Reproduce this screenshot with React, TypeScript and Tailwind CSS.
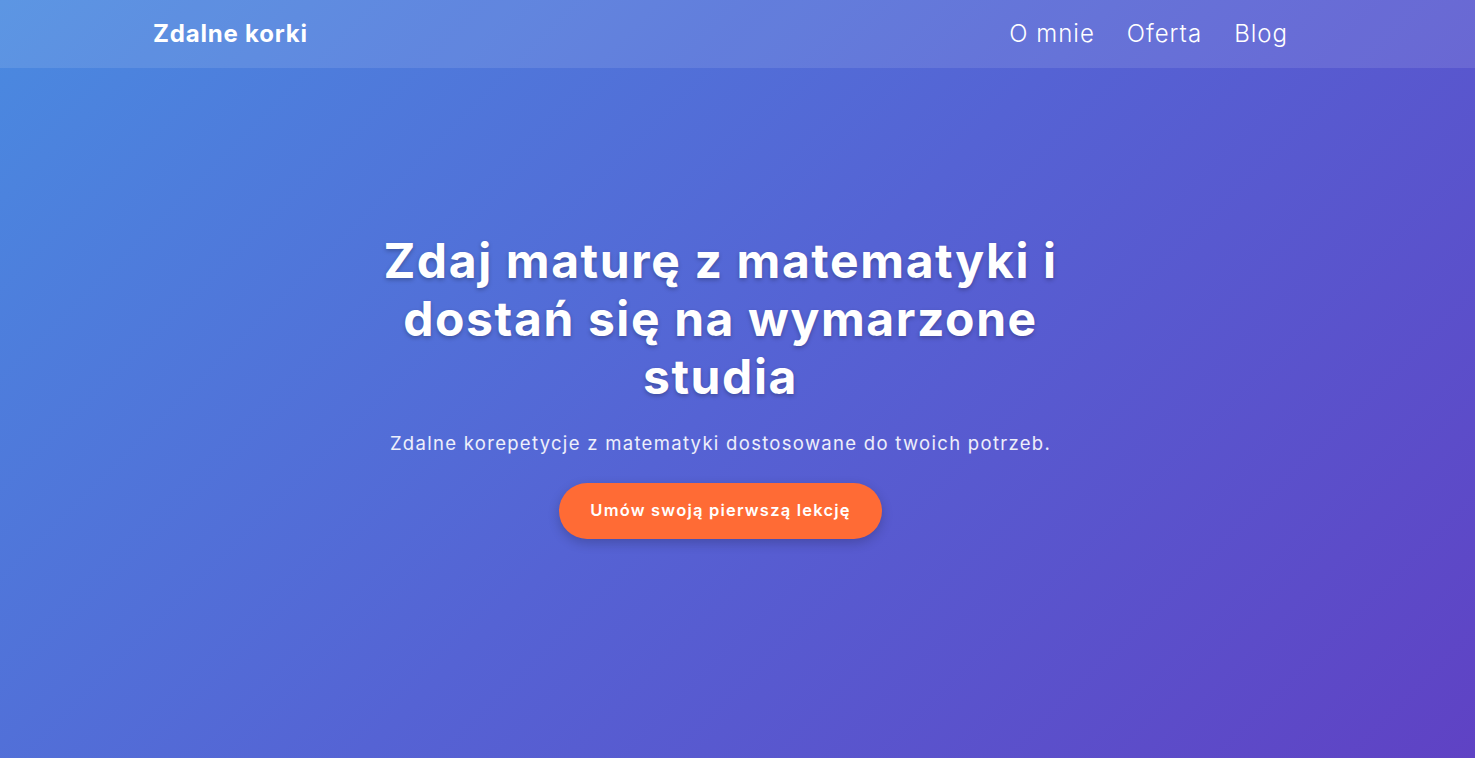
import React from 'react';

const font = { fontFamily: 'Inter, "Noto Sans", sans-serif' };

const Header = () => (
  <header className="h-[68px] bg-white/10">
    <div className="ml-[153px] w-[1135px] h-full flex items-center justify-between">
      <a className="text-[24px] font-bold text-white tracking-[0.8px]">Zdalne korki</a>
      <nav className="flex gap-[32px] text-[24px] font-light text-white tracking-[1px]">
        <a>O mnie</a>
        <a>Oferta</a>
        <a>Blog</a>
      </nav>
    </div>
  </header>
);

export default function App() {
  return (
    <div
      className="w-full h-[758px] overflow-hidden bg-[linear-gradient(135deg,#4a8ae0_0%,#5563d4_50%,#5f42c4_100%)]"
      style={font}
    >
      <Header />

      {/* Hero */}
      <section className="ml-[153px] w-[1135px] flex flex-col items-center pt-[164px]">
        <h1 className="max-w-[720px] text-center text-[48px] leading-[58px] font-bold text-white tracking-[1.6px] [text-shadow:0_2px_4px_rgba(0,0,0,0.25)]">
          Zdaj maturę z matematyki i dostań się na wymarzone studia
        </h1>
        <p className="mt-[24px] text-[18.5px] text-white/90 tracking-[1.3px]">
          Zdalne korepetycje z matematyki dostosowane do twoich potrzeb.
        </p>
        <button className="mt-[25px] h-[56px] w-[323px] rounded-full bg-[#ff6b35] text-[16.5px] font-semibold text-white tracking-[1.2px] shadow-[0_4px_12px_rgba(0,0,0,0.2)]">
          Umów swoją pierwszą lekcję
        </button>
      </section>
    </div>
  );
}
